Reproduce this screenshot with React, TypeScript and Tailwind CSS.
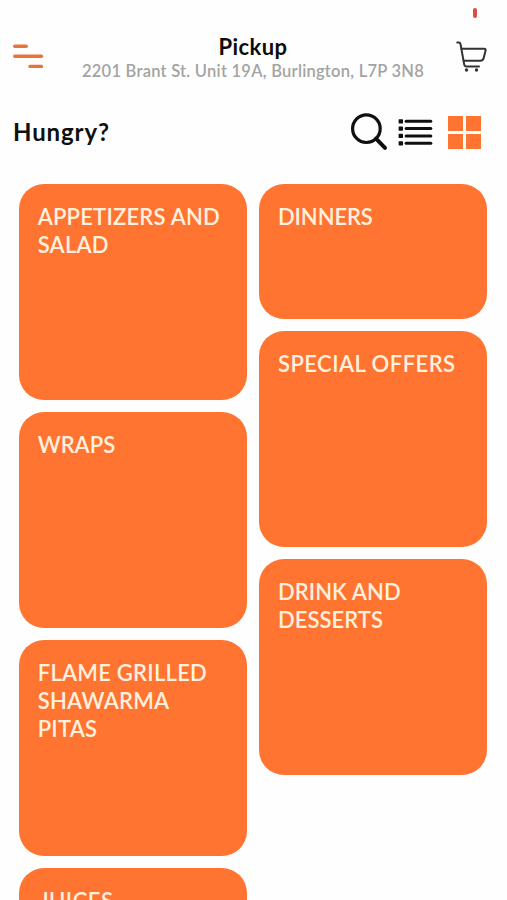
import React from 'react';

interface Category {
  name: string;
  height: string;
  spacing: string;
}

const leftColumn: Category[] = [
  { name: 'APPETIZERS AND SALAD', height: 'h-[216px]', spacing: 'tracking-[0.2px]' },
  { name: 'WRAPS', height: 'h-[216px]', spacing: 'tracking-normal' },
  { name: 'FLAME GRILLED SHAWARMA PITAS', height: 'h-[216px]', spacing: 'tracking-[0.25px]' },
  { name: 'JUICES', height: 'h-[216px]', spacing: 'tracking-[0.5px] pl-[1.5px]' },
];

const rightColumn: Category[] = [
  { name: 'DINNERS', height: 'h-[135px]', spacing: 'tracking-[-0.1px]' },
  { name: 'SPECIAL OFFERS', height: 'h-[216px]', spacing: 'tracking-[0.45px]' },
  { name: 'DRINK AND DESSERTS', height: 'h-[216px]', spacing: 'tracking-[0.05px]' },
];

const MenuIcon = () => (
  <svg className="h-6 w-8" viewBox="0 0 32 24" fill="none" stroke="#e8743b" strokeWidth="3.4" strokeLinecap="round">
    <path d="M2.7 2.3h11.6M2.7 12.3h26.8M18 22.4h11.5" />
  </svg>
);

const CartIcon = () => (
  <svg className="h-8 w-8" viewBox="0 0 32 32" fill="none" stroke="#333" strokeWidth="2" strokeLinecap="round" strokeLinejoin="round">
    <path d="M2.2 2.5h1.5q1.5 0 1.8 1.5l3.7 20.4q.4 2.1 2.4 2.1H24" />
    <path d="M6.5 8.8h22.6q1.9 0 1.5 1.8l-2 7.6q-.7 2.5-3.3 2.5H8.7" />
    <circle cx="11.5" cy="30" r="1.7" fill="#333" stroke="none" />
    <circle cx="21.5" cy="30" r="1.7" fill="#333" stroke="none" />
  </svg>
);

const SearchIcon = () => (
  <svg className="h-[38px] w-[38px]" viewBox="0 0 38 38" fill="none" stroke="#101010">
    <circle cx="16.4" cy="15.7" r="13.8" strokeWidth="3.2" />
    <path d="M26 25.7l9 9.2" strokeWidth="4" strokeLinecap="round" />
  </svg>
);

const ListIcon = () => (
  <svg className="h-[27px] w-[35px]" viewBox="0 0 35 27" fill="#101010">
    {[2.3, 9.6, 16.9, 24.3].map(y => (
      <g key={y}>
        <rect x="0.6" y={y - 2.1} width="4.4" height="4.2" rx="0.6" />
        <rect x="6.6" y={y - 1.5} width="27.7" height="3" rx="1.5" />
      </g>
    ))}
  </svg>
);

const GridIcon = () => (
  <div className="grid h-[33px] w-[33px] grid-cols-2 gap-[3px]">
    <span className="bg-[#ff7430]"></span>
    <span className="bg-[#ff7430]"></span>
    <span className="bg-[#ff7430]"></span>
    <span className="bg-[#ff7430]"></span>
  </div>
);

const CategoryTile = ({ category }: { category: Category }) => (
  <div className={`${category.height} shrink-0 rounded-[25px] bg-[#ff7430] px-[18.5px] pt-[19.2px]`}>
    <h2 className={`text-[22px] leading-[28px] font-semibold text-[#fff0df] ${category.spacing}`}>{category.name}</h2>
  </div>
);

const App: React.FC = () => {
  return (
    <div className="relative h-[900px] w-[507px] overflow-hidden bg-[#fefefe] font-['Lato',sans-serif]">
      <span className="absolute top-[8px] left-[473px] h-[10px] w-[4px] rounded-full bg-[#de4a45]"></span>

      <header className="flex h-[90px] items-start justify-between pr-5 pl-3">
        <button className="mt-[44px]"><MenuIcon /></button>
        <div className="mt-[34px] ml-[7px] text-center whitespace-nowrap">
          <h1 className="text-[22px] leading-[25px] font-bold tracking-[0.4px] text-[#0c0c0c]">Pickup</h1>
          <p className="text-[16.5px] leading-[25px] font-semibold tracking-[0.25px] text-[#a3a3a3]">2201 Brant St. Unit 19A, Burlington, L7P 3N8</p>
        </div>
        <button className="mt-[40px]"><CartIcon /></button>
      </header>

      <div className="flex h-[93.5px] items-start pr-[26px] pl-[13px]">
        <p className="mt-[27px] grow text-[24px] leading-[30px] font-bold tracking-[0.9px] text-[#101010]">Hungry?</p>
        <button className="mt-[23px]"><SearchIcon /></button>
        <button className="mt-[29px] ml-[10px]"><ListIcon /></button>
        <button className="mt-[26px] ml-[15px]"><GridIcon /></button>
      </div>

      <main className="flex items-start gap-[12.3px] px-[19.2px]">
        <div className="flex w-[228px] flex-col gap-[12.2px]">
          {leftColumn.map(category => <CategoryTile key={category.name} category={category} />)}
        </div>
        <div className="flex w-[228px] flex-col gap-[12.2px]">
          {rightColumn.map(category => <CategoryTile key={category.name} category={category} />)}
        </div>
      </main>
    </div>
  );
};

export default App;
